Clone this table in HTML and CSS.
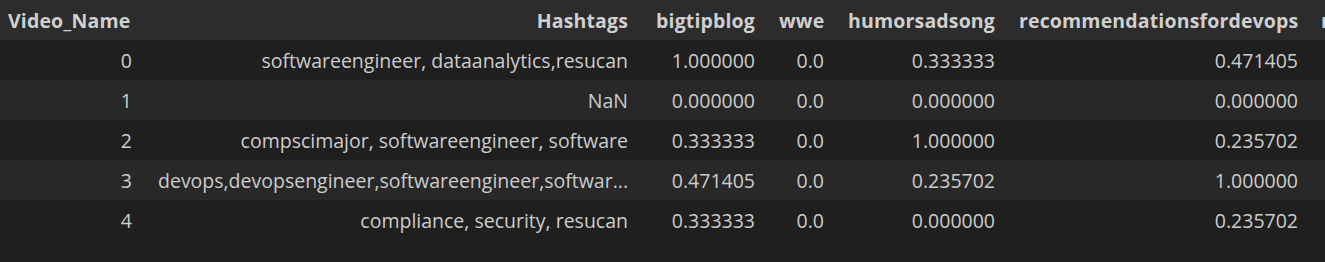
FILE: index.html
```html
<!DOCTYPE html>
<html lang="en">
<head>
<meta charset="utf-8">
<title>DataFrame</title>
<link rel="stylesheet" href="styles.css">
</head>
<body>
<div class="output">
  <table class="dataframe">
    <colgroup>
      <col class="c-index">
      <col class="c-hashtags">
      <col class="c-big">
      <col class="c-wwe">
      <col class="c-humor">
      <col class="c-rec">
      <col class="c-next">
    </colgroup>
    <thead>
      <tr>
        <th class="first">Video_Name</th>
        <th>Hashtags</th>
        <th>bigtipblog</th>
        <th>wwe</th>
        <th>humorsadsong</th>
        <th>recommendationsfordevops</th>
        <th class="next">r</th>
      </tr>
    </thead>
    <tbody>
      <tr>
        <td class="first">0</td>
        <td>softwareengineer, dataanalytics,resucan</td>
        <td>1.000000</td>
        <td>0.0</td>
        <td>0.333333</td>
        <td>0.471405</td>
        <td></td>
      </tr>
      <tr>
        <td class="first">1</td>
        <td>NaN</td>
        <td>0.000000</td>
        <td>0.0</td>
        <td>0.000000</td>
        <td>0.000000</td>
        <td></td>
      </tr>
      <tr>
        <td class="first">2</td>
        <td>compscimajor, softwareengineer, software</td>
        <td>0.333333</td>
        <td>0.0</td>
        <td>1.000000</td>
        <td>0.235702</td>
        <td></td>
      </tr>
      <tr>
        <td class="first">3</td>
        <td>devops,devopsengineer,softwareengineer,softwar...</td>
        <td>0.471405</td>
        <td>0.0</td>
        <td>0.235702</td>
        <td>1.000000</td>
        <td></td>
      </tr>
      <tr>
        <td class="first">4</td>
        <td>compliance, security, resucan</td>
        <td>0.333333</td>
        <td>0.0</td>
        <td>0.000000</td>
        <td>0.235702</td>
        <td></td>
      </tr>
    </tbody>
  </table>
</div>
</body>
</html>
```
FILE: styles.css
```css
html, body {
  margin: 0;
  padding: 0;
  background: #1f1f1f;
  overflow: hidden;
}

.output {
  width: 1325px;
  height: 262px;
  overflow: hidden;
  background: #1f1f1f;
}

.dataframe {
  border-collapse: collapse;
  table-layout: fixed;
  width: 1450px;
  font-family: "Open Sans", "Liberation Sans", sans-serif;
  font-size: 19.5px;
  color: #cccccc;
}

.c-index { width: 144px; }
.c-hashtags { width: 496px; }
.c-big { width: 127px; }
.c-wwe { width: 69px; }
.c-humor { width: 171px; }
.c-rec { width: 303px; }
.c-next { width: 140px; }

.dataframe th,
.dataframe td {
  height: 40px;
  padding: 0 12px;
  text-align: right;
  white-space: nowrap;
  overflow: hidden;
  box-sizing: border-box;
  vertical-align: middle;
}

.dataframe th {
  font-weight: 700;
  letter-spacing: 0.15px;
  color: #d0d0d0;
  background: #2c2c2c;
}

.dataframe th.first {
  text-align: left;
  padding-left: 8px;
}

.dataframe th.next {
  text-align: left;
  padding-left: 11px;
}

.dataframe tbody tr:nth-child(odd) {
  background: #1f1f1f;
}

.dataframe tbody tr:nth-child(even) {
  background: #282828;
}
```
